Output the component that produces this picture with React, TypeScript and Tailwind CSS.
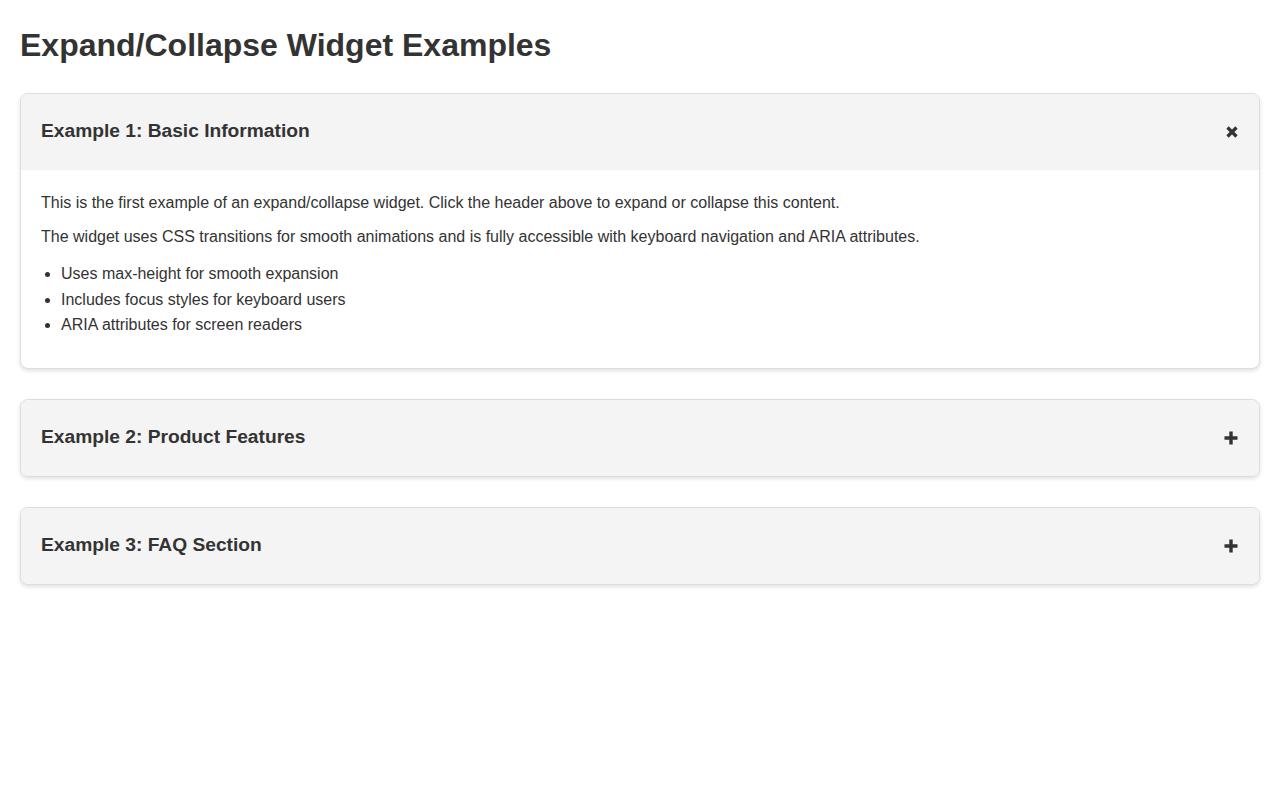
import { useState } from 'react';

const items = [
  { id: 1, title: 'Example 1: Basic Information' },
  { id: 2, title: 'Example 2: Product Features' },
  { id: 3, title: 'Example 3: FAQ Section' },
];

function Icon({ open }: { open: boolean }) {
  return open ? (
    <svg className="w-[14px] h-[14px]" viewBox="0 0 14 14" fill="none" stroke="#333" strokeWidth="3.2" strokeLinecap="butt">
      <path d="M2.5 2.5l9 9M11.5 2.5l-9 9" />
    </svg>
  ) : (
    <svg className="w-[16px] h-[16px]" viewBox="0 0 16 16" fill="#333">
      <path d="M6.3 1.5h3.4v4.8h4.8v3.4H9.7v4.8H6.3V9.7H1.5V6.3h4.8z" />
    </svg>
  );
}

export default function App() {
  const [open, setOpen] = useState<number[]>([1]);

  const toggle = (id: number) =>
    setOpen(open.includes(id) ? open.filter((x) => x !== id) : [...open, id]);

  return (
    <div className="min-h-[800px] bg-white p-5 text-[#333] font-['Liberation_Sans',Arial,sans-serif]">
      <h1 className="text-[32px] font-bold leading-[48px] mt-[1px] mb-[24px]">Expand/Collapse Widget Examples</h1>

      {items.map((item) => {
        const isOpen = open.includes(item.id);
        return (
          <div
            key={item.id}
            className="mb-[30px] rounded-lg border border-[#ddd] bg-white overflow-hidden shadow-[0_2px_4px_rgba(0,0,0,0.12)]"
          >
            <button
              onClick={() => toggle(item.id)}
              className="flex w-full h-[76px] items-center justify-between bg-[#f4f4f4] px-5 text-left cursor-pointer"
            >
              <h3 className="text-[19.2px] font-bold leading-6 mb-[2px]">{item.title}</h3>
              <span className={isOpen ? '' : 'mt-[1px]'}>
                <Icon open={isOpen} />
              </span>
            </button>

            {isOpen && item.id === 1 && (
              <div className="px-5 pt-[20px] pb-[20px] text-base leading-[25.6px]">
                <p className="mb-2">
                  This is the first example of an expand/collapse widget. Click the header above to expand or
                  collapse this content.
                </p>
                <p className="mb-3">
                  The widget uses CSS transitions for smooth animations and is fully accessible with keyboard
                  navigation and ARIA attributes.
                </p>
                <ul className="list-disc pl-5 mb-[10px]">
                  <li>Uses max-height for smooth expansion</li>
                  <li>Includes focus styles for keyboard users</li>
                  <li>ARIA attributes for screen readers</li>
                </ul>
              </div>
            )}
          </div>
        );
      })}
    </div>
  );
}
